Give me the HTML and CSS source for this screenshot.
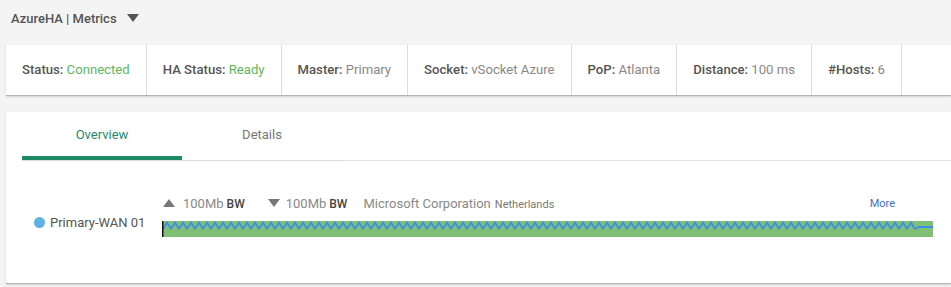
FILE: index.html
```html
<!DOCTYPE html>
<html>
<head>
<meta charset="utf-8">
<link rel="stylesheet" href="styles.css">
</head>
<body>
<div class="header">
  <span class="title">AzureHA | Metrics</span>
  <span class="caret"></span>
</div>
<div class="status-card">
  <div class="cell"><span class="lbl">Status:</span> <span class="val green">Connected</span></div>
  <div class="cell"><span class="lbl">HA Status:</span> <span class="val green">Ready</span></div>
  <div class="cell"><span class="lbl">Master:</span> <span class="val">Primary</span></div>
  <div class="cell"><span class="lbl">Socket:</span> <span class="val">vSocket Azure</span></div>
  <div class="cell"><span class="lbl">PoP:</span> <span class="val">Atlanta</span></div>
  <div class="cell"><span class="lbl">Distance:</span> <span class="val">100 ms</span></div>
  <div class="cell"><span class="lbl">#Hosts:</span> <span class="val">6</span></div>
</div>
<div class="main-card">
  <div class="tabs">
    <div class="tab-group">
      <div class="tab active">Overview</div>
      <div class="tab">Details</div>
    </div>
  </div>
  <div class="wan">
    <div class="wan-name"><span class="dot"></span>Primary-WAN 01</div>
    <div class="wan-body">
      <div class="info">
        <span class="tri up"></span><span class="bw">100Mb</span><span class="bwl">BW</span>
        <span class="tri down"></span><span class="bw">100Mb</span><span class="bwl">BW</span>
        <span class="isp">Microsoft Corporation</span><span class="country">Netherlands</span>
        <span class="more">More</span>
      </div>
      <svg class="chart" width="771" height="16" viewBox="0 0 771 16">
        <defs>
          <pattern id="zig" patternUnits="userSpaceOnUse" width="8" height="16" x="1" y="0">
            <path d="M0 8 L4 1.5 L8 8" fill="none" stroke="#3a8ee6" stroke-width="1.8"/>
          </pattern>
        </defs>
        <rect x="0" y="0" width="771" height="16" fill="#82bf76"/>
        <rect x="1" y="0" width="752" height="16" fill="url(#zig)"/>
        <path d="M753 8 L757 6 L771 6" fill="none" stroke="#3a8ee6" stroke-width="1.8"/>
        <rect x="0" y="0" width="1.5" height="16" fill="#111"/>
      </svg>
    </div>
  </div>
</div>
</body>
</html>
```

FILE: styles.css
```css
html, body {
  margin: 0;
  padding: 0;
}
body {
  background: #f4f4f4;
  font-family: Roboto, "Liberation Sans", sans-serif;
  width: 951px;
  height: 287px;
  overflow: hidden;
}
.header {
  height: 36px;
  display: flex;
  align-items: center;
  padding-left: 11px;
  gap: 10px;
}
.title {
  font-size: 13px;
  font-weight: 500;
  color: #555;
}
.caret {
  width: 0;
  height: 0;
  border-left: 6px solid transparent;
  border-right: 6px solid transparent;
  border-top: 8px solid #555;
}
.status-card {
  margin: 9px 0 0 6px;
  height: 50px;
  background: #fff;
  display: flex;
  border-bottom: 1px solid #b5b5b5;
  box-shadow: 0 1px 2px rgba(0,0,0,0.15);
}
.cell {
  padding: 0 16px;
  line-height: 50px;
  border-right: 1px solid #ddd;
  font-size: 13.15px;
  white-space: pre;
}
.lbl {
  font-weight: 500;
  color: #555;
}
.val {
  color: #888;
}
.val.green {
  color: #5cb85c;
}
.main-card {
  margin: 16px 0 0 6px;
  height: 171px;
  background: #fff;
  border-bottom: 1px solid #b5b5b5;
  box-shadow: 0 1px 2px rgba(0,0,0,0.15);
}
.tabs {
  margin-left: 16px;
  border-bottom: 1px solid #e4e4e4;
}
.tab-group {
  display: flex;
  width: 320px;
  border-bottom: 1px solid #dcdcdc;
  margin-bottom: -1px;
}
.tab {
  width: 160px;
  height: 48px;
  box-sizing: border-box;
  padding-bottom: 3px;
  display: flex;
  align-items: center;
  justify-content: center;
  font-size: 13px;
  color: #777;
}
.tab.active {
  color: #1f8a70;
  border-bottom: 4px solid #1b8a65;
  padding-bottom: 0;
  padding-top: 1px;
}
.wan {
  display: flex;
  padding: 31px 18px 0 28px;
}
.wan-name {
  width: 128px;
  display: flex;
  align-items: center;
  font-size: 13px;
  color: #555;
  height: 20px;
  margin-top: 20px;
}
.dot {
  width: 11px;
  height: 11px;
  border-radius: 50%;
  background: #5eb0e5;
  margin-right: 5px;
}
.wan-body {
  width: 771px;
}
.info {
  display: flex;
  align-items: center;
  height: 22px;
  font-size: 13px;
}
.tri {
  width: 0;
  height: 0;
  border-left: 6px solid transparent;
  border-right: 6px solid transparent;
  margin-left: 1px;
  margin-right: 8px;
}
.tri.up {
  border-bottom: 8px solid #777;
}
.tri.down {
  border-top: 8px solid #777;
  margin-left: 23px;
  margin-right: 6px;
}
.bw {
  color: #888;
}
.bwl {
  color: #444;
  font-weight: 500;
  font-size: 12px;
  margin-left: 3px;
  margin-top: 2px;
}
.isp {
  color: #888;
  margin-left: 16px;
}
.country {
  color: #777;
  font-size: 11px;
  margin-left: 4px;
  margin-top: 2px;
}
.more {
  margin-left: auto;
  margin-right: 38px;
  font-size: 11px;
  color: #3c6fd0;
}
.chart {
  display: block;
  margin-top: 7px;
}
```
